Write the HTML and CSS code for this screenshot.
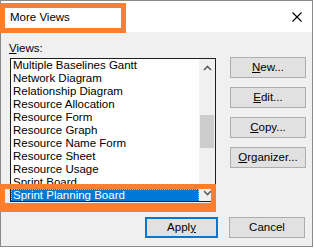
FILE: index.html
```html
<!DOCTYPE html>
<html lang="en">
<head>
    <meta charset="UTF-8">
    <title>More Views</title>
    <link rel="stylesheet" href="styles.css">
</head>
<body>
    <div class="window">
        <div class="titlebar">
            <span class="title">More Views</span>
            <svg class="close" width="10" height="10" viewBox="0 0 10 10">
                <path d="M0.5 0.5 L9.5 9.5 M9.5 0.5 L0.5 9.5" stroke="#000" stroke-width="1.1" fill="none"/>
            </svg>
        </div>

        <div class="dialog-body">
            <div class="main">
                <div class="views">
                    <div class="label"><u>V</u>iews:</div>
                    <div class="listbox">
                        <ul class="items">
                            <li>Multiple Baselines Gantt</li>
                            <li>Network Diagram</li>
                            <li>Relationship Diagram</li>
                            <li>Resource Allocation</li>
                            <li>Resource Form</li>
                            <li>Resource Graph</li>
                            <li>Resource Name Form</li>
                            <li>Resource Sheet</li>
                            <li>Resource Usage</li>
                            <li>Sprint Board</li>
                            <li class="selected"><span>Sprint Planning Board</span></li>
                        </ul>
                        <div class="scrollbar">
                            <div class="arrow">
                                <svg width="9" height="6" viewBox="0 0 9 6"><path d="M1 5 L4.5 1.5 L8 5" stroke="#606060" stroke-width="1.6" fill="none"/></svg>
                            </div>
                            <div class="track"><div class="thumb"></div></div>
                            <div class="arrow">
                                <svg width="9" height="6" viewBox="0 0 9 6"><path d="M1 1 L4.5 4.5 L8 1" stroke="#606060" stroke-width="1.6" fill="none"/></svg>
                            </div>
                        </div>
                    </div>
                </div>

                <div class="side-buttons">
                    <button><u>N</u>ew...</button>
                    <button><u>E</u>dit...</button>
                    <button><u>C</u>opy...</button>
                    <button><u>O</u>rganizer...</button>
                </div>
            </div>

            <div class="footer">
                <button class="apply">Appl<u>y</u></button>
                <button class="cancel">Cancel</button>
            </div>
        </div>

        <!-- callout boxes drawn over the dialog -->
        <div class="mark mark-title"></div>
        <div class="mark mark-selected"></div>
    </div>
</body>
</html>
```

FILE: styles.css
```css
body {
    margin: 0;
    font-family: "Segoe UI", "Liberation Sans", Arial, sans-serif;
    font-size: 11.5px;
    color: #000;
    background: #fff;
}

.window {
    position: relative;
    width: 311px;
    height: 245px;
    border: 1px solid #8a8a8a;
    background: #f0f0f0;
    display: flex;
    flex-direction: column;
}

.titlebar {
    height: 31px;
    background: #fff;
    display: flex;
    align-items: center;
    justify-content: space-between;
    padding: 0 10px 0 9px;
}

.title {
    padding-top: 1px;
}

.close {
    display: block;
    margin-top: 1px;
}

.dialog-body {
    flex: 1;
    padding: 9px 7px 0 8px;
    display: flex;
    flex-direction: column;
}

.main {
    display: flex;
    gap: 14px;
}

.label {
    height: 15px;
    line-height: 15px;
    margin-bottom: 2px;
}

.listbox {
    width: 204px;
    height: 142px;
    margin-left: 1px;
    border: 1px solid #1e1e1e;
    background: #fff;
    display: flex;
    overflow: hidden;
}

.items {
    list-style: none;
    margin: 0;
    padding: 0;
    width: 188px;
}

.items li {
    height: 13px;
    line-height: 13px;
    padding-left: 2px;
    white-space: nowrap;
}

.items li.selected {
    background: #0078d7;
    color: #fff;
    outline: 1px dotted #f6a95c;
    outline-offset: -1px;
}

.scrollbar {
    width: 16px;
    background: #f0f0f0;
    display: flex;
    flex-direction: column;
}

.arrow {
    height: 17px;
    display: flex;
    align-items: center;
    justify-content: center;
}

.arrow svg {
    display: block;
}

.track {
    flex: 1;
}

.thumb {
    height: 33px;
    margin: 39px 1px 0 1px;
    background: #cdcdcd;
}

.side-buttons {
    display: flex;
    flex-direction: column;
    gap: 9px;
    margin-top: 16px;
}

button {
    font-family: inherit;
    font-size: 11.5px;
    color: #000;
    width: 76px;
    height: 21px;
    padding: 0;
    background: #e1e1e1;
    border: 1px solid #adadad;
    border-radius: 0;
    line-height: 17px;
}

.footer {
    display: flex;
    justify-content: flex-end;
    gap: 11px;
    margin-top: 15px;
}

button.apply {
    width: 73px;
    border: 2px solid #0078d7;
}

.mark {
    position: absolute;
    border: 5px solid #fe7f2b;
    box-sizing: border-box;
}

.mark-title {
    left: -1px;
    top: 2px;
    width: 126px;
    height: 30px;
}

.mark-selected {
    left: -1px;
    top: 183px;
    width: 216px;
    height: 28px;
    border-bottom-width: 9px;
}
```
